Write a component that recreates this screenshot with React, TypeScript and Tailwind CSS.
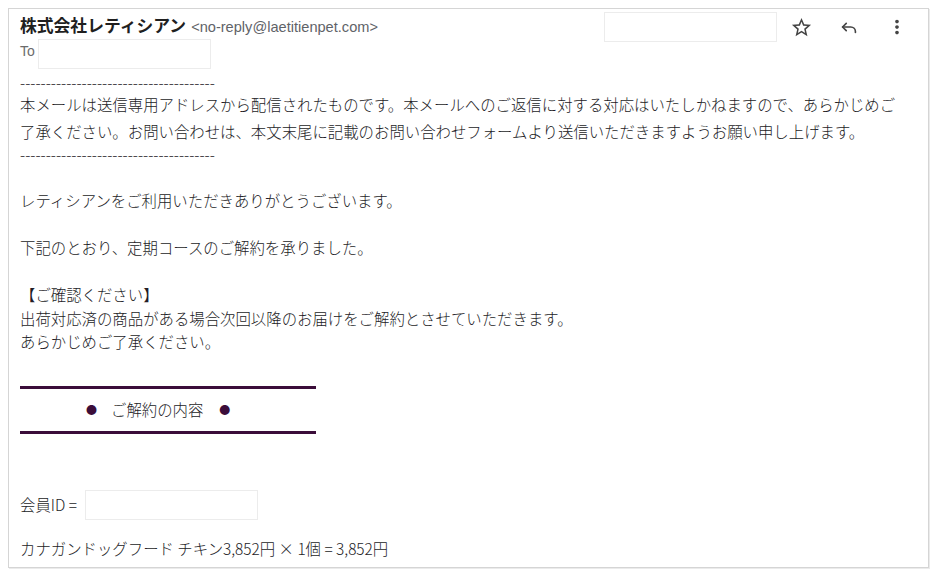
import { MdStarBorder, MdMoreVert } from "react-icons/md"

const cjk = { fontFamily: '"Noto Sans CJK JP", "Noto Sans", sans-serif' }
const latin = { fontFamily: '"Liberation Sans", Arial, sans-serif' }

function Blank({ className }: { className: string }) {
	return <div className={"border border-[#ececec] bg-white " + className}></div>
}

function ReplyIcon() {
	return (
		<svg width="22" height="22" viewBox="0 0 24 24" fill="none" stroke="#444" strokeWidth="1.8" strokeLinecap="round" strokeLinejoin="round">
			<path d="M9 8L5 12l4 4" />
			<path d="M5 12h9a5 5 0 0 1 5 5v1" />
		</svg>
	)
}

export default function App() {
	const dashes = "--------------------------------------"
	return (
		<div className="bg-white w-[934px] h-[578px] pt-[8px] pl-[8px]" style={cjk}>
			<div className="w-[921px] h-[560px] border border-[#d5d5d5] shadow-[1px_1px_0_#ebebeb] pl-[11px] pr-[7px] text-[#231c26]">
				{/* header */}
				<div className="flex justify-between">
					<div className="pt-[4px]">
						<div className="flex items-baseline leading-[24px]">
							<span className="text-[16.8px] font-bold text-[#1f1f1f]">株式会社レティシアン</span>
							<span className="ml-[5px] text-[14.6px] text-[#5f6368]" style={latin}>&lt;no-reply@laetitienpet.com&gt;</span>
						</div>
						<div className="flex items-center">
							<span className="text-[14px] text-[#6b6b6b] w-[18px] mb-[6px]" style={latin}>To</span>
							<Blank className="w-[173px] h-[30px]" />
						</div>
					</div>
					<div className="flex items-center h-[30px] mt-[3px]">
						<Blank className="w-[173px] h-[30px]" />
						<div className="w-[48px] flex justify-center text-[#444]">
							<MdStarBorder size={23} />
						</div>
						<div className="w-[48px] flex justify-center">
							<ReplyIcon />
						</div>
						<div className="w-[48px] flex justify-center text-[#444]">
							<MdMoreVert size={22} />
						</div>
					</div>
				</div>

				{/* body */}
				<div className="text-[15.4px] font-light whitespace-nowrap">
					<div className="leading-[18px] mt-[4px]">{dashes}</div>
					<div className="leading-[27px]">
						本メールは送信専用アドレスから配信されたものです。本メールへのご返信に対する対応はいたしかねますので、あらかじめご
						<br />
						了承ください。お問い合わせは、本文末尾に記載のお問い合わせフォームより送信いただきますようお願い申し上げます。
					</div>
					<div className="leading-[18px]">{dashes}</div>

					<div className="leading-[23.5px] mt-[26px]">
						<div>レティシアンをご利用いただきありがとうございます。</div>
						<div className="h-[23.5px]"></div>
						<div>下記のとおり、定期コースのご解約を承りました。</div>
						<div className="h-[23.5px]"></div>
						<div>【ご確認ください】</div>
						<div>出荷対応済の商品がある場合次回以降のお届けをご解約とさせていただきます。</div>
						<div>あらかじめご了承ください。</div>
					</div>

					<div className="w-[296px] h-[3px] bg-[#3b0d3a] mt-[32px]"></div>
					<div className="leading-[23.5px] mt-[9px] flex items-center w-[296px] pl-[66px]">
						<span className="text-[#3b0d3a] text-[11px]">●</span>
						<span className="ml-[14px]">ご解約の内容</span>
						<span className="ml-[16px] text-[#3b0d3a] text-[11px]">●</span>
					</div>
					<div className="w-[296px] h-[3px] bg-[#3b0d3a] mt-[10px]"></div>

					<div className="flex items-center mt-[56px]">
						<span>会員ID =</span>
						<Blank className="ml-[8px] w-[173px] h-[30px]" />
					</div>
					<div className="leading-[23.5px] mt-[17px]">カナガンドッグフード チキン3,852円 × 1個 = 3,852円</div>
				</div>
			</div>
		</div>
	)
}
